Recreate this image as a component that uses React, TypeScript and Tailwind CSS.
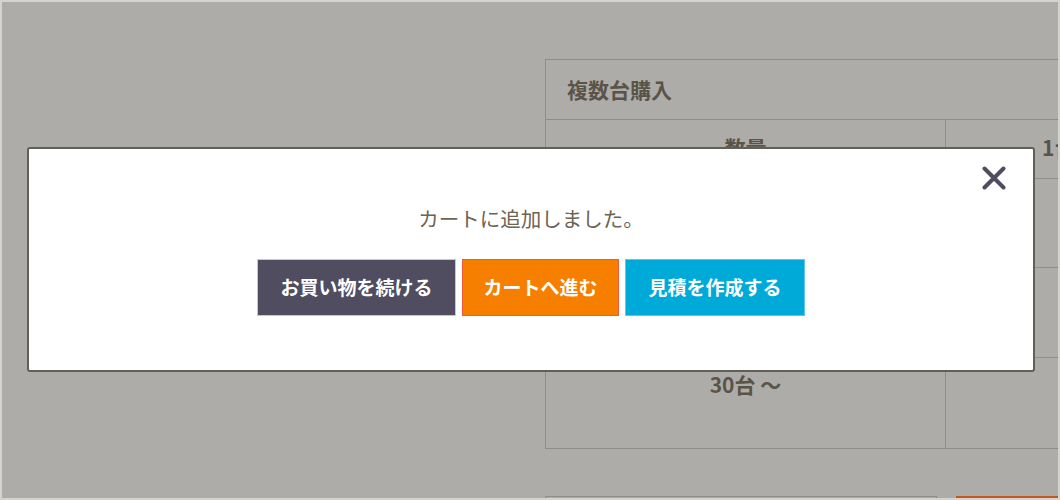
import React from "react";

export default function App() {
  const jp = { fontFamily: '"Noto Sans CJK JP", "Noto Sans", sans-serif' };
  return (
    <div className="w-[1060px] h-[500px] bg-[#d4d3cf] p-[2px]" style={jp}>
      <div className="relative w-full h-full bg-[#adaca8] overflow-hidden">
        {/* background page */}
        <div className="ml-[543px] pt-[57px] w-[620px]">
          <div className="border border-[#8e8d89] text-[#5a5448] font-bold">
            <div className="h-[60px] flex items-center pl-[21px] text-[21px] border-b border-[#8e8d89]">
              複数台購入
            </div>
            <div className="flex">
              <div className="w-[400px] border-r border-[#8e8d89] flex flex-col">
                <div className="h-[59px] border-b border-[#8e8d89] text-center text-[21px] pt-[12px]">数量</div>
                <div className="h-[89px] border-b border-[#8e8d89]"></div>
                <div className="h-[90px] border-b border-[#8e8d89]"></div>
                <div className="h-[90px] text-center text-[21px] pt-[11px]">30台 〜</div>
              </div>
              <div className="flex-1 flex flex-col">
                <div className="h-[59px] border-b border-[#8e8d89] text-[21px] pt-[12px] pl-[96px]">1台</div>
                <div className="h-[89px] border-b border-[#8e8d89]"></div>
                <div className="h-[90px] border-b border-[#8e8d89]"></div>
                <div className="h-[90px]"></div>
              </div>
            </div>
          </div>
          <div className="flex mt-[47px]">
            <div className="w-[392px] h-[40px] border border-[#8e8d89]"></div>
            <div className="ml-[19px] flex-1 h-[40px] bg-[#c4581a]"></div>
          </div>
        </div>

        {/* modal */}
        <div className="absolute left-[25px] top-[145px] w-[1008px] h-[225px] bg-white border-2 border-[#605f5a] rounded-[3px] flex flex-col items-center">
          <button className="absolute right-[27px] top-[17px] w-[24px] h-[24px] flex items-center justify-center">
            <svg width="24" height="24" viewBox="0 0 24 24">
              <path d="M2.5 2.5 L21.5 21.5 M21.5 2.5 L2.5 21.5" stroke="#4f4d5f" strokeWidth="4" strokeLinecap="round" />
            </svg>
          </button>
          <p className="mt-[55px] text-[20.5px] leading-[28px] text-[#6d6453]">カートに追加しました。</p>
          <div className="mt-[27px] flex gap-[6px]">
            <div className="w-[199px] h-[57px] bg-[#4f4d5f] border border-[#c8c8cc] text-white font-bold text-[19px] flex items-center justify-center">
              お買い物を続ける
            </div>
            <div className="w-[157px] h-[57px] bg-[#f77f00] border border-[#ef5a3c] text-white font-bold text-[19px] flex items-center justify-center">
              カートへ進む
            </div>
            <div className="w-[180px] h-[57px] bg-[#00aad8] border border-[#5fc8e6] text-white font-bold text-[19px] flex items-center justify-center">
              見積を作成する
            </div>
          </div>
        </div>
      </div>
    </div>
  );
}
